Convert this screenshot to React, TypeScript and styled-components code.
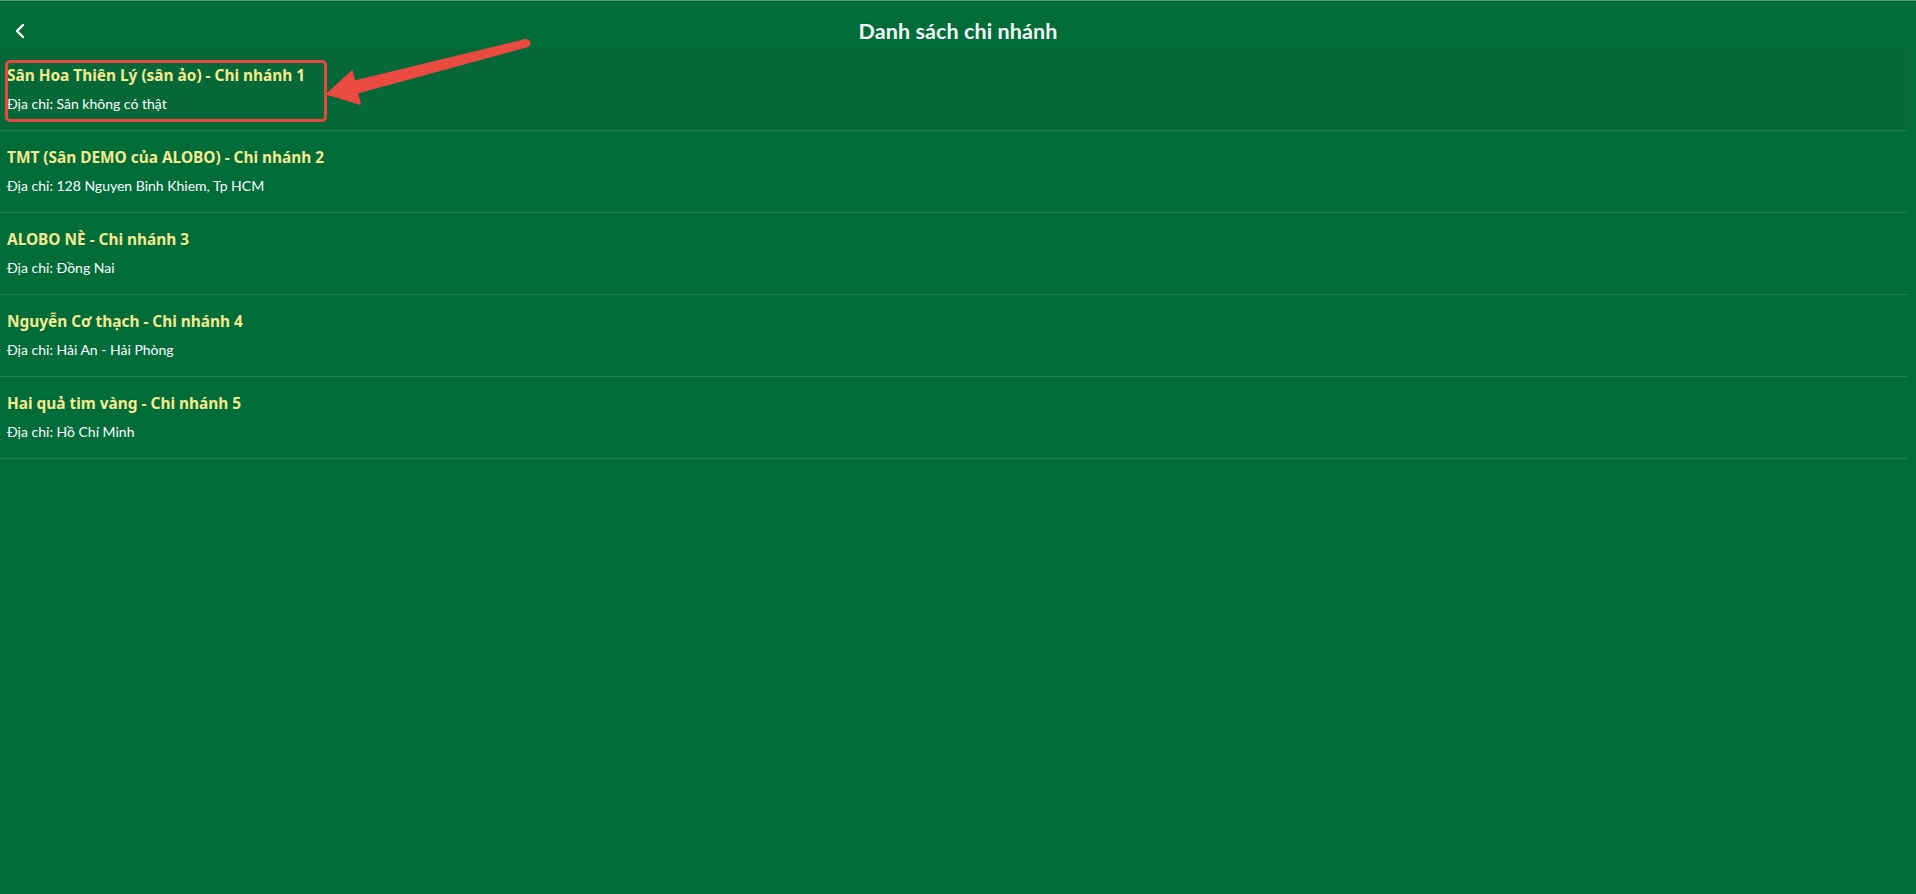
import React from "react";
import styled, { createGlobalStyle } from "styled-components";

const GlobalStyle = createGlobalStyle`
  html, body { margin: 0; padding: 0; background: #006c3a; }
  body { font-family: "Lato", "Noto Sans", sans-serif; }
  * { box-sizing: border-box; }
`;

const Page = styled.div`
  position: relative;
  width: 100%;
  min-height: 894px;
  background: #006c3a;
  border-top: 1px solid #5f9474;
  color: #ffffff;
`;

const Header = styled.header`
  position: relative;
  height: 48px;
  padding-top: 11px;
  display: flex;
  align-items: center;
  justify-content: center;
`;

const BackButton = styled.button`
  position: absolute;
  left: 10px;
  top: 20px;
  width: 20px;
  height: 20px;
  padding: 0;
  border: none;
  background: transparent;
  display: flex;
  align-items: center;
  justify-content: center;
  cursor: pointer;
`;

const Title = styled.h1`
  margin: 0;
  font-size: 21.5px;
  font-weight: 700;
  color: #f4fbf6;
  letter-spacing: 0.1px;
`;

const List = styled.ul`
  list-style: none;
  margin: 0;
  padding: 0 8px 0 0;
`;

const Row = styled.li<{ $active?: boolean }>`
  position: relative;
  padding: 17px 0 16px 7px;
  border-bottom: 1px solid #1f7d4c;
  background: ${(p) => (p.$active ? "#066839" : "transparent")};
  display: flex;
  flex-direction: column;
  gap: 8px;
  cursor: pointer;
`;

const Name = styled.div`
  font-family: "Noto Sans", "Lato", sans-serif;
  font-size: 15.4px;
  line-height: 20px;
  font-weight: 700;
  color: #f6ea8e;
`;

const Address = styled.div`
  font-size: 14px;
  line-height: 20px;
  font-weight: 400;
  color: #ffffff;
`;

const Highlight = styled.div`
  position: absolute;
  left: 5px;
  top: 11px;
  width: 322px;
  height: 62px;
  border: 3px solid #e9483e;
  border-radius: 5px;
  pointer-events: none;
`;

const ArrowLayer = styled.svg`
  position: absolute;
  left: 0;
  top: 0;
  pointer-events: none;
`;

const branches = [
  { name: "Sân Hoa Thiên Lý (sân ảo) - Chi nhánh 1", address: "Sân không có thật" },
  { name: "TMT (Sân DEMO của ALOBO) - Chi nhánh 2", address: "128 Nguyen Binh Khiem, Tp HCM" },
  { name: "ALOBO NÈ - Chi nhánh 3", address: "Đồng Nai" },
  { name: "Nguyễn Cơ thạch - Chi nhánh 4", address: "Hải An - Hải Phòng" },
  { name: "Hai quả tim vàng - Chi nhánh 5", address: "Hồ Chí Minh" },
];

export default function App() {
  return (
    <>
      <GlobalStyle />
      <Page>
        <Header>
          <BackButton aria-label="Back">
            <svg width="12" height="16" viewBox="0 0 12 16">
              <path d="M9 2 L3 8 L9 14" fill="none" stroke="#ffffff" strokeWidth="2.4" strokeLinecap="round" strokeLinejoin="round" />
            </svg>
          </BackButton>
          <Title>Danh sách chi nhánh</Title>
        </Header>
        <List>
          {branches.map((b, i) => (
            <Row key={b.name} $active={i === 0}>
              <Name>{b.name}</Name>
              <Address>Địa chỉ: {b.address}</Address>
              {i === 0 && <Highlight />}
            </Row>
          ))}
        </List>
        <ArrowLayer width="560" height="130" viewBox="0 0 560 130">
          <polygon
            points="526.3,38.6 527.9,45.3 357.5,91.8 360,103 327,93 352,70 354.5,80.2"
            fill="#ea4a40"
            strokeLinejoin="round"
            stroke="#ea4a40"
            strokeWidth="1.5"
          />
          <circle cx="527" cy="42" r="3.4" fill="#ea4a40" />
        </ArrowLayer>
      </Page>
    </>
  );
}
